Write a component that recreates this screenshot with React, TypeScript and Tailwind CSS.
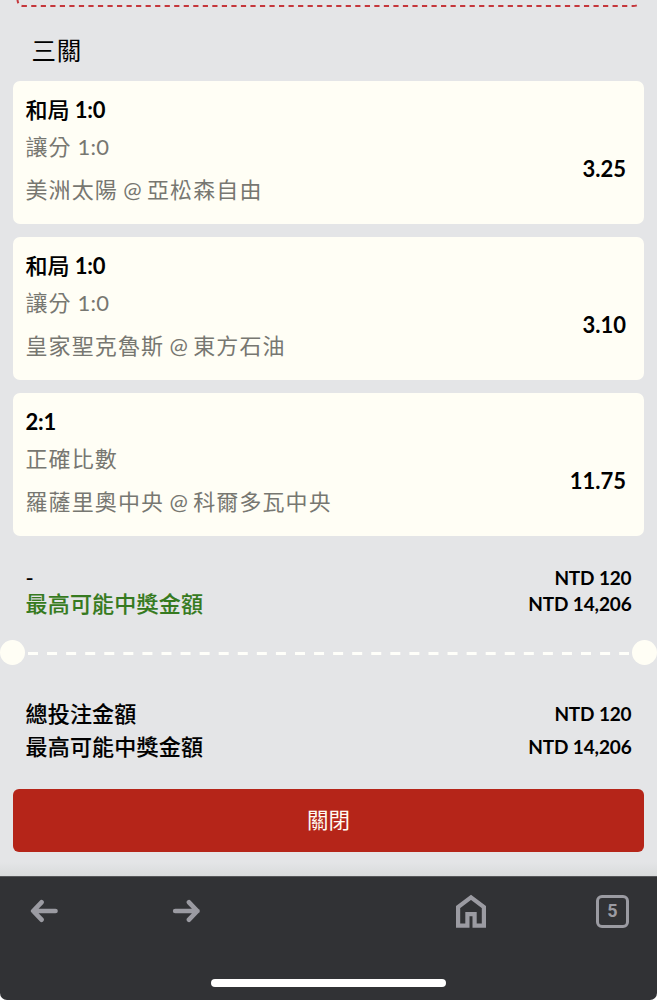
import React from 'react';

type Leg = { pick: string; market: string; match: string; odds: string };

const legs: Leg[] = [
  { pick: '和局 1:0', market: '讓分 1:0', match: '美洲太陽 @ 亞松森自由', odds: '3.25' },
  { pick: '和局 1:0', market: '讓分 1:0', match: '皇家聖克魯斯 @ 東方石油', odds: '3.10' },
  { pick: '2:1', market: '正確比數', match: '羅薩里奧中央 @ 科爾多瓦中央', odds: '11.75' },
];

// Latin runs are set without the extra tracking that the Chinese text carries.
function Mixed({ text, latin }: { text: string; latin: string }) {
  return (
    <>
      {text.split(/([ -~]+)/).map((part, i) =>
        i % 2 ? (
          <span key={i} className={latin}>
            {part}
          </span>
        ) : (
          part
        ),
      )}
    </>
  );
}

function LegCard({ leg }: { leg: Leg }) {
  return (
    <article className="flex h-[143px] items-center justify-between rounded-[7px] bg-[#fffef5] pl-[12.5px] pr-[18px]">
      <div className="flex h-full flex-col whitespace-pre pt-[11px]">
        <h2 className="h-9 text-[22px] leading-9 font-medium text-black [-webkit-text-stroke:0.1px_black]">
          <Mixed text={leg.pick} latin="font-bold tracking-[-0.2px] [-webkit-text-stroke:0px]" />
        </h2>
        <p className="mt-px h-9 text-[22px] leading-9 tracking-[1.1px] text-[#777771]">
          <Mixed text={leg.market} latin="tracking-[0.2px]" />
        </p>
        <p className="mt-[7px] h-9 text-[22px] leading-9 tracking-[1.1px] text-[#777771]">
          <Mixed text={leg.match} latin="tracking-[-0.2px]" />
        </p>
      </div>
      <span className="mt-[33px] text-[22px] leading-8 font-bold text-black">{leg.odds}</span>
    </article>
  );
}

function SumRow({ label, amount, className }: { label: string; amount: string; className: string }) {
  return (
    <div className={'flex items-center justify-between ' + className}>
      <span className="text-[22px] font-medium tracking-[0.2px] [-webkit-text-stroke:0.1px_currentColor]">{label}</span>
      <span className="text-[19px] font-bold tracking-[-0.15px] text-black">{amount}</span>
    </div>
  );
}

export default function App() {
  return (
    <div className="flex h-[1000px] w-[657px] flex-col overflow-hidden bg-[#e4e5e7] font-['Lato','Noto_Sans_CJK_TC',sans-serif] text-black">
      <svg className="block h-[10px] w-full shrink-0" viewBox="0 0 657 10" fill="none">
        <path d="M17.5 -2 V0 Q18 6 23.5 6 H633 Q638 6 639.5 2.5" stroke="#c5373c" strokeWidth="2" strokeDasharray="5.2 4.33" />
      </svg>

      <main className="flex flex-col px-[13px]">
        <h1 className="mb-[11px] mt-[21px] h-[39px] pl-[18.5px] text-[24.5px] leading-[39px] tracking-[0.7px]">三關</h1>
        <section className="flex flex-col gap-[13px]">
          {legs.map((leg) => (
            <LegCard key={leg.match} leg={leg} />
          ))}
        </section>
      </main>

      <section className="mt-[29px] flex flex-col pr-[25.5px] pl-[25.5px]">
        <SumRow label="-" amount="NTD 120" className="h-[26px] leading-[26px]" />
        <SumRow label="最高可能中獎金額" amount="NTD 14,206" className="h-[26px] leading-[26px] text-[#367a20]" />
      </section>

      <div className="mt-[22px] flex h-[26px] shrink-0 items-center">
        <span className="h-[25px] w-[25px] shrink-0 rounded-full bg-[#fffef5]" />
        <svg className="h-[26px] min-w-0 flex-1" viewBox="0 0 607 26" fill="none">
          <path d="M3 14.5H604" stroke="#fffffa" strokeWidth="3.2" strokeDasharray="10 9.07" />
        </svg>
        <span className="h-[25px] w-[25px] shrink-0 rounded-full bg-[#fffef5]" />
      </div>

      <section className="mt-[32px] flex flex-col px-[25.5px]">
        <SumRow label="總投注金額" amount="NTD 120" className="h-[33px] leading-[33px]" />
        <SumRow label="最高可能中獎金額" amount="NTD 14,206" className="h-[33px] leading-[33px]" />
      </section>

      <button className="mx-[13px] mt-[26px] h-[63px] shrink-0 rounded-[6px] bg-[#b52519] text-[21.5px] text-[#fffaf2]">關閉</button>

      <div className="mt-auto h-[14px] shrink-0 bg-gradient-to-b from-[#e4e5e7] to-[#d9dbdc]" />
      <footer className="h-[124px] shrink-0 bg-white">
        <div className="flex h-full flex-col items-center rounded-b-[7px] border-t border-[#56575a] bg-[#313235]">
          <nav className="flex h-[68px] w-full items-center pl-[30px] pr-[28px] text-[#9b9ba2]">
            <button aria-label="返回">
              <svg className="block h-[24px] w-[28px]" viewBox="0 0 28 24" fill="none" stroke="currentColor" strokeWidth="4.7" strokeLinecap="round" strokeLinejoin="round">
                <path d="M25.5 12H3.5M11.5 3.3L3.2 12L11.5 20.7" />
              </svg>
            </button>
            <button aria-label="前進" className="ml-[114px]">
              <svg className="block h-[24px] w-[28px]" viewBox="0 0 28 24" fill="none" stroke="currentColor" strokeWidth="4.7" strokeLinecap="round" strokeLinejoin="round">
                <path d="M3.2 12H25.5M17 3.3L25.3 12L17 20.7" />
              </svg>
            </button>
            <button aria-label="首頁" className="ml-auto">
              <svg className="block h-[34px] w-[30px]" viewBox="0 0 30 34" fill="none" stroke="currentColor" strokeWidth="4.2">
                <path d="M2.1 31.6V13L15 3.4L27.9 13V31.6H18.6V20.2H11.4V31.6Z" />
              </svg>
            </button>
            <button className="ml-[110px] flex h-[33px] w-[33px] items-center justify-center rounded-[6px] border-[3px] border-current font-['Roboto',sans-serif] text-[18px] leading-none font-bold">5</button>
          </nav>
          <div className="mt-[34px] h-[8px] w-[235px] rounded-full bg-white" />
        </div>
      </footer>
    </div>
  );
}
